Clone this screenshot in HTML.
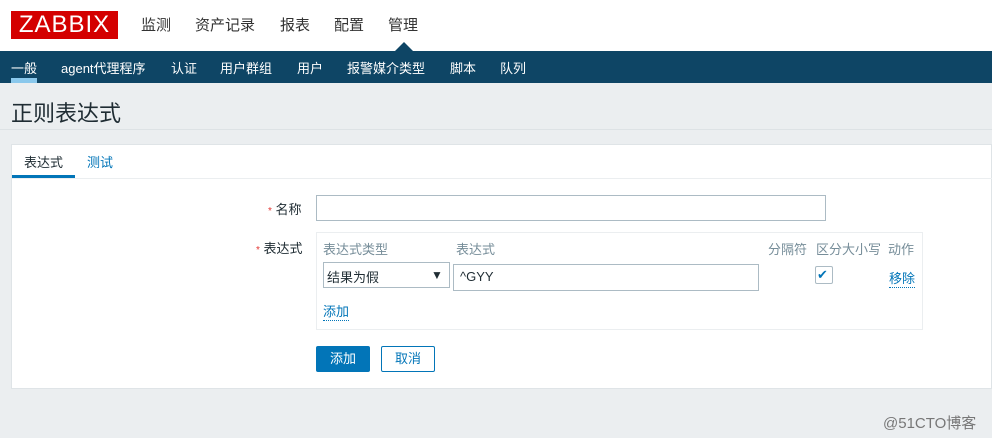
<!DOCTYPE html>
<html><head><meta charset="utf-8"><style>
*{margin:0;padding:0;box-sizing:border-box}
body{width:992px;height:438px;background:#ebeef0;font-family:"Liberation Sans","Noto Sans CJK SC",sans-serif;font-size:13px;color:#1f2c33;position:relative;overflow:hidden}
.a{position:absolute}
.hdr{left:0;top:0;width:992px;height:51px;background:#fff}
.logo{left:11px;top:11px;width:107px;height:28px;background:#d40000;color:#fff;font-size:24px;line-height:28px;text-align:center;letter-spacing:1px}
.top{top:14px;font-size:15px;color:#333}
.nav{left:0;top:51px;width:992px;height:32px;background:#0e4565}
.nav span{position:absolute;top:7px;color:#fff;font-size:13px}
.tri{left:395px;top:42px;width:0;height:0;border-left:9px solid transparent;border-right:9px solid transparent;border-bottom:9px solid #0e4565}
.box{left:11px;top:144px;width:981px;height:245px;background:#fff;border:1px solid #dfe4e7}
.inp{position:absolute;border:1px solid #acbbc4;background:#fff}
.red{color:#e33734;font-size:10px}
.gray{color:#768d99}
.lnk{color:#0275b8;border-bottom:1px dotted #0275b8}
</style></head><body>
<div class="a hdr"></div>
<div class="a logo">ZABBIX</div>
<div class="a top" style="left:141px">监测</div>
<div class="a top" style="left:195px">资产记录</div>
<div class="a top" style="left:280px">报表</div>
<div class="a top" style="left:334px">配置</div>
<div class="a top" style="left:388px">管理</div>
<div class="a tri"></div>
<div class="a nav">
<span style="left:11px">一般</span>
<span style="left:61px">agent代理程序</span>
<span style="left:171px">认证</span>
<span style="left:220px">用户群组</span>
<span style="left:297px">用户</span>
<span style="left:347px">报警媒介类型</span>
<span style="left:450px">脚本</span>
<span style="left:500px">队列</span>
<div class="a" style="left:11px;top:27px;width:26px;height:5px;background:#8ac8ec"></div>
</div>
<div class="a" style="left:11px;top:96px;font-size:22px;color:#1f2c33">正则表达式</div>
<div class="a" style="left:0;top:129px;width:992px;height:1px;background:#dde2e5"></div>
<div class="a box"></div>
<div class="a" style="left:24px;top:152px">表达式</div>
<div class="a" style="left:87px;top:152px;color:#0275b8">测试</div>
<div class="a" style="left:12px;top:175px;width:63px;height:3px;background:#0275b8"></div>
<div class="a" style="left:12px;top:178px;width:980px;height:1px;background:#ebeef0"></div>
<div class="a" style="left:268px;top:199px"><span class="red">*</span> 名称</div>
<div class="inp" style="left:316px;top:195px;width:510px;height:26px"></div>
<div class="a" style="left:256px;top:238px"><span class="red">*</span> 表达式</div>
<div class="a" style="left:316px;top:232px;width:607px;height:98px;border:1px solid #ebeef0"></div>
<div class="a gray" style="left:323px;top:239px">表达式类型</div>
<div class="a gray" style="left:456px;top:239px">表达式</div>
<div class="a gray" style="left:768px;top:239px">分隔符</div>
<div class="a gray" style="left:816px;top:239px">区分大小写</div>
<div class="a gray" style="left:888px;top:239px">动作</div>
<div class="inp" style="left:323px;top:262px;width:127px;height:26px"></div>
<div class="a" style="left:327px;top:267px">结果为假</div>
<div class="a" style="left:431px;top:268px;font-size:12px">▼</div>
<div class="inp" style="left:453px;top:264px;width:306px;height:27px"></div>
<div class="a" style="left:460px;top:269px">^GYY</div>
<div class="inp" style="left:815px;top:266px;width:18px;height:18px;border-radius:2px"></div>
<div class="a" style="left:817px;top:267px;color:#0275b8;font-size:13px">✔</div>
<div class="a lnk" style="left:889px;top:268px">移除</div>
<div class="a lnk" style="left:323px;top:301px">添加</div>
<div class="a" style="left:316px;top:346px;width:54px;height:26px;background:#0275b8;border-radius:2px;color:#fff;text-align:center;line-height:26px">添加</div>
<div class="a" style="left:381px;top:346px;width:54px;height:26px;border:1px solid #0275b8;border-radius:2px;color:#0275b8;text-align:center;line-height:24px;background:#fff">取消</div>
<div class="a" style="left:883px;top:412px;color:#777;font-size:15px">@51CTO博客</div>
</body></html>
